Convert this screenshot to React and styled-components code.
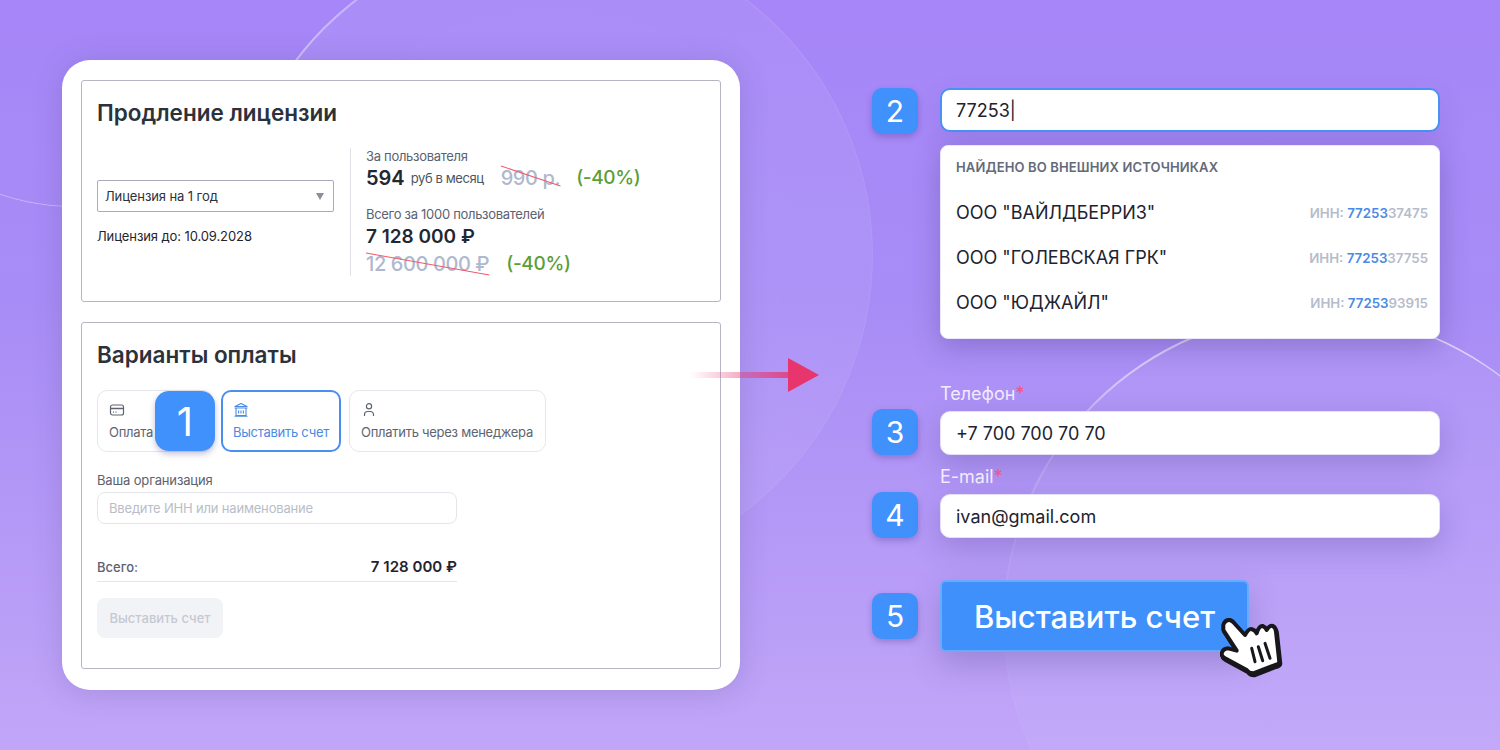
import React from "react";
import styled, { createGlobalStyle } from "styled-components";

const GlobalStyle = createGlobalStyle`
  html, body {
    margin: 0;
    padding: 0;
  }
  body {
    font-family: Inter, "Noto Sans", sans-serif;
    color: #1c2230;
  }
  * {
    box-sizing: border-box;
  }
`;

const Page = styled.div`
  position: relative;
  width: 1500px;
  height: 750px;
  overflow: hidden;
  display: flex;
  padding: 60px 0 0 62px;
  background: linear-gradient(180deg, #a686f8 0%, #a88cf6 40%, #c1a6f8 100%);
`;

const Circle = styled.div`
  position: absolute;
  border-radius: 50%;
  left: ${(p) => p.$x}px;
  top: ${(p) => p.$y}px;
  width: ${(p) => p.$size}px;
  height: ${(p) => p.$size}px;
  background: ${(p) => p.$fill};
  &::before {
    content: "";
    position: absolute;
    inset: 0;
    border-radius: 50%;
    padding: 1.5px;
    background: ${(p) => p.$line};
    mask: linear-gradient(#000 0 0) content-box exclude, linear-gradient(#000 0 0);
  }
`;

const Card = styled.div`
  position: relative;
  width: 678px;
  height: 630px;
  padding: 20px 19px;
  background: #fff;
  border-radius: 28px;
  box-shadow: 0 2px 30px rgba(70, 60, 120, 0.2);
  display: flex;
  flex-direction: column;
  gap: 20px;
`;

const Panel = styled.section`
  position: relative;
  height: ${(p) => p.$h}px;
  padding: 16px 15px 0;
  border: 1px solid #b4b7c3;
  border-radius: 3px;
`;

const PanelTitle = styled.h2`
  margin: 0;
  font-size: 22.5px;
  line-height: 32px;
  font-weight: 600;
  color: #2b323c;
`;

const LicenseRow = styled.div`
  display: flex;
  margin-top: 19px;
  height: 128px;
`;

const LicenseLeft = styled.div`
  width: 237px;
  padding-top: 32px;
`;

const Select = styled.div`
  height: 32px;
  padding: 0 9px 0 7px;
  display: flex;
  align-items: center;
  justify-content: space-between;
  border: 1px solid #a9acb8;
  border-radius: 2px;
  font-size: 13px;
  letter-spacing: -0.1px;
  color: #2b323c;
`;

const Caret = styled.span`
  width: 0;
  height: 0;
  border-left: 4px solid transparent;
  border-right: 4px solid transparent;
  border-top: 7px solid #8a8f9c;
`;

const Until = styled.div`
  margin-top: 16px;
  font-size: 13px;
  line-height: 16px;
  letter-spacing: -0.1px;
  color: #1f2530;
`;

const LicenseRight = styled.div`
  margin-left: 16px;
  padding-left: 15px;
  border-left: 1px solid #dfe1e6;
  display: flex;
  flex-direction: column;
`;

const SmallLabel = styled.div`
  font-size: 13px;
  line-height: 16px;
  letter-spacing: -0.3px;
  color: #5b6270;
  margin-top: ${(p) => p.$top || 0}px;
`;

const PriceRow = styled.div`
  display: flex;
  align-items: center;
  height: ${(p) => p.$h}px;
`;

const Price = styled.span`
  font-size: ${(p) => p.$size}px;
  font-weight: 600;
  color: #222831;
`;

const Unit = styled.span`
  margin-left: 6px;
  font-size: 13px;
  letter-spacing: -0.4px;
  color: #4e5562;
`;

const OldPrice = styled.span`
  position: relative;
  margin-left: ${(p) => p.$left || 0}px;
  font-size: 20px;
  font-weight: 500;
  letter-spacing: -0.4px;
  color: #b0b8cd;
`;

const Strike = styled.svg`
  position: absolute;
  left: 0;
  top: ${(p) => p.$top}px;
  width: 100%;
  height: ${(p) => p.$h}px;
  overflow: visible;
`;

const Discount = styled.span`
  margin-left: ${(p) => p.$left}px;
  font-size: 19px;
  font-weight: 500;
  letter-spacing: -0.35px;
  color: #5c9e37;
`;

const Tabs = styled.div`
  display: flex;
  gap: 8px;
  margin-top: 19px;
`;

const Tab = styled.div`
  width: ${(p) => p.$w}px;
  height: 62px;
  padding: ${(p) => (p.$active ? "10px 10px 0" : "11px 11px 0")};
  border-radius: 10px;
  border: ${(p) => (p.$active ? "2px solid #4a8ff0" : "1px solid #e6e7ec")};
  color: ${(p) => (p.$active ? "#4a8ae6" : "#5e6572")};
  font-size: 13px;
  line-height: 16px;
  letter-spacing: -0.27px;
  white-space: nowrap;
  display: flex;
  flex-direction: column;
  gap: 6px;
  overflow: hidden;
  svg {
    display: block;
  }
`;

const FieldLabel = styled.div`
  margin-top: 20px;
  font-size: 13px;
  line-height: 16px;
  letter-spacing: -0.15px;
  color: #5b6270;
`;

const FakeInput = styled.div`
  width: 360px;
  height: 32px;
  margin-top: 4px;
  padding: 0 11px;
  display: flex;
  align-items: center;
  border: 1px solid #e4e6eb;
  border-radius: 8px;
  font-size: 13px;
  letter-spacing: -0.18px;
  color: #b9bdc8;
`;

const TotalRow = styled.div`
  width: 360px;
  height: 34px;
  margin-top: 24px;
  padding-top: 4px;
  display: flex;
  align-items: center;
  justify-content: space-between;
  border-bottom: 1px solid #e4e6eb;
`;

const TotalLabel = styled.span`
  font-size: 13px;
  font-weight: 500;
  color: #5b6270;
`;

const TotalValue = styled.span`
  font-size: 15px;
  font-weight: 600;
  letter-spacing: 0.03px;
  color: #1f2530;
`;

const DisabledButton = styled.div`
  width: 126px;
  height: 40px;
  margin-top: 16px;
  display: flex;
  align-items: center;
  justify-content: center;
  border-radius: 8px;
  background: #f2f3f7;
  font-size: 13px;
  font-weight: 500;
  color: #c6c9d2;
`;

const Badge = styled.div`
  flex: none;
  width: 46px;
  height: 46px;
  display: flex;
  align-items: center;
  justify-content: center;
  border-radius: 10px;
  background: #4091fb;
  color: #fff;
  font-size: 30px;
  box-shadow: 0 3px 6px rgba(60, 50, 130, 0.3);
`;

const BigBadge = styled(Badge)`
  position: absolute;
  left: 73px;
  top: 68px;
  width: 60px;
  height: 60px;
  border-radius: 14px;
  font-size: 40px;
`;

const Arrow = styled.svg`
  position: absolute;
  left: 690px;
  top: 356px;
`;

const RightColumn = styled.div`
  position: relative;
  margin-left: 132px;
  padding-top: 28px;
  width: 568px;
  display: flex;
  flex-direction: column;
`;

const Row = styled.div`
  display: flex;
  align-items: ${(p) => p.$align || "flex-start"};
  gap: 22px;
  margin-top: ${(p) => p.$top || 0}px;
`;

const FieldColumn = styled.div`
  width: 500px;
  display: flex;
  flex-direction: column;
`;

const Field = styled.div`
  width: 500px;
  height: 44px;
  padding: 0 ${(p) => (p.$focus ? 14 : 15)}px;
  display: flex;
  align-items: center;
  background: #fff;
  border-radius: 10px;
  font-size: 18px;
  color: #1d2330;
  border: ${(p) => (p.$focus ? "2px solid #4a91f5" : "1px solid #e4e0f5")};
  box-shadow: 0 10px 30px rgba(60, 50, 120, ${(p) => (p.$focus ? 0.12 : 0.24)});
`;

const Caption = styled.div`
  font-size: 18px;
  line-height: 22px;
  height: 22px;
  margin-bottom: 6px;
  color: #f2ecff;
`;

const Star = styled.span`
  color: #f0577f;
`;

const Dropdown = styled.div`
  margin-top: 13px;
  width: 500px;
  height: 194px;
  padding: 13px 11px 0 15px;
  background: #fff;
  border: 1px solid #ece8fa;
  border-radius: 8px;
  box-shadow: 0 8px 28px rgba(60, 50, 120, 0.3);
`;

const DropdownTitle = styled.div`
  font-size: 13px;
  line-height: 16px;
  font-weight: 600;
  letter-spacing: 0.14px;
  color: #646a7a;
`;

const OptionList = styled.div`
  margin-top: 15px;
`;

const Option = styled.div`
  display: flex;
  align-items: center;
  justify-content: space-between;
  height: 45px;
  font-size: 18px;
  color: #1d2330;
`;

const Inn = styled.span`
  font-size: 13.3px;
  font-weight: 600;
  color: #b7bccb;
`;

const InnMatch = styled.span`
  color: #4a8ae6;
`;

const BigButton = styled.div`
  position: relative;
  width: 309px;
  height: 72px;
  display: flex;
  align-items: center;
  justify-content: center;
  border-radius: 6px;
  background: #4090fb;
  border: 2px solid #6aaafa;
  color: #fff;
  font-size: 31px;
  font-weight: 500;
  box-shadow: 0 12px 30px rgba(60, 50, 120, 0.25);
`;

const Cursor = styled.div`
  position: absolute;
  left: 278px;
  top: 36px;
  line-height: 0;
  filter: drop-shadow(1px 2px 0 #17171c);
`;

const options = [
  { name: 'ООО "ВАЙЛДБЕРРИЗ"', rest: "37475" },
  { name: 'ООО "ГОЛЕВСКАЯ ГРК"', rest: "37755" },
  { name: 'ООО "ЮДЖАЙЛ"', rest: "93915" },
];

const CardIcon = () => (
  <svg width="16" height="16" viewBox="0 0 16 16" fill="none" stroke="currentColor" strokeWidth="1.2">
    <rect x="1.5" y="3" width="13" height="10" rx="2" />
    <path d="M1.5 6.5h13" strokeWidth="1.6" />
    <path d="M4 10.2h1M6.5 10.2h1" />
  </svg>
);

const BankIcon = () => (
  <svg width="16" height="16" viewBox="0 0 16 16" fill="none" stroke="currentColor" strokeWidth="1.1">
    <path d="M8 1.5 14 4.5H2z" strokeLinejoin="round" />
    <path d="M1.5 6h13M3 6.5v7h10v-7M1.5 14.2h13" />
    <path d="M5.6 8.5v3M8 8.5v3M10.4 8.5v3" />
  </svg>
);

const UserIcon = () => (
  <svg width="16" height="16" viewBox="0 0 16 16" fill="none" stroke="currentColor" strokeWidth="1.2">
    <circle cx="8" cy="4.3" r="2.6" />
    <path d="M3.5 14v-1.5a3 3 0 0 1 3-3h3a3 3 0 0 1 3 3V14" />
  </svg>
);

const HandCursor = () => (
  <svg width="64" height="60" viewBox="0 0 64 60">
    <path
      d="M3.3 7Q5 1.5 10 2 13 3 15 6L25 17Q29 10 32 11.3 35 12 36.7 15.3 39 7.5 42.7 8 45.5 9 46.7 12 50 7 52.7 8 55.5 9 56 13.7L59.3 43.7Q59 46 55 47L33.3 55.3Q29 55.5 26.7 52L5 40.3Q1 38 1.7 35.3 3 30.5 8.3 30.3L16.7 32.7 3.3 12Z"
      fill="#fff"
      stroke="#17171c"
      strokeWidth="4"
      strokeLinejoin="round"
    />
    <path d="M31.7 30.3l3.3 13.4M38.3 28.7l4.4 14M45 25.3l5 15" stroke="#17171c" strokeWidth="3" strokeLinecap="round" />
  </svg>
);

const App = () => {
  return (
    <Page>
      <GlobalStyle />
      <Circle
        $x={229}
        $y={-67}
        $size={644}
        $fill="radial-gradient(circle at 50% 55%, rgba(255,255,255,0.08), rgba(255,255,255,0.05))"
        $line="linear-gradient(110deg, rgba(255,255,255,0.6) 5%, rgba(255,255,255,0.05) 30%, rgba(255,255,255,0.07) 85%)"
      />
      <Circle
        $x={-150}
        $y={-237}
        $size={444}
        $fill="transparent"
        $line="linear-gradient(180deg, transparent 88%, rgba(255,255,255,0.4) 100%)"
      />
      <Circle
        $x={1003}
        $y={312}
        $size={620}
        $fill="linear-gradient(180deg, rgba(255,255,255,0.05), rgba(255,255,255,0.03))"
        $line="linear-gradient(180deg, rgba(255,255,255,0.6) 5%, rgba(255,255,255,0.2) 20%, rgba(255,255,255,0.03) 45%)"
      />
      <Card>
        <Panel $h={222}>
          <PanelTitle>Продление лицензии</PanelTitle>
          <LicenseRow>
            <LicenseLeft>
              <Select>
                Лицензия на 1 год
                <Caret />
              </Select>
              <Until>Лицензия до: 10.09.2028</Until>
            </LicenseLeft>
            <LicenseRight>
              <SmallLabel>За пользователя</SmallLabel>
              <PriceRow $h={28}>
                <Price $size={20}>594</Price>
                <Unit>руб в месяц</Unit>
                <OldPrice $left={17}>
                  990 р.
                  <Strike $top={-1} $h={22} viewBox="0 0 59 22" preserveAspectRatio="none">
                    <line x1="0" y1="1" x2="59" y2="21" stroke="#ef5b6b" strokeWidth="1" />
                  </Strike>
                </OldPrice>
                <Discount $left={16}>(-40%)</Discount>
              </PriceRow>
              <SmallLabel $top={15}>Всего за 1000 пользователей</SmallLabel>
              <PriceRow $h={31}>
                <Price $size={19}>7 128 000 ₽</Price>
              </PriceRow>
              <PriceRow $h={25}>
                <OldPrice>
                  12 600 000 ₽
                  <Strike $top={0} $h={24} viewBox="0 0 122 24" preserveAspectRatio="none">
                    <line x1="0" y1="1" x2="122" y2="23" stroke="#ef5b6b" strokeWidth="1" />
                  </Strike>
                </OldPrice>
                <Discount $left={17}>(-40%)</Discount>
              </PriceRow>
            </LicenseRight>
          </LicenseRow>
        </Panel>
        <Panel $h={347}>
          <PanelTitle>Варианты оплаты</PanelTitle>
          <Tabs>
            <Tab $w={116}>
              <CardIcon />
              Оплата картой
            </Tab>
            <Tab $w={120} $active>
              <BankIcon />
              Выставить счет
            </Tab>
            <Tab $w={197}>
              <UserIcon />
              Оплатить через менеджера
            </Tab>
          </Tabs>
          <BigBadge>1</BigBadge>
          <FieldLabel>Ваша организация</FieldLabel>
          <FakeInput>Введите ИНН или наименование</FakeInput>
          <TotalRow>
            <TotalLabel>Всего:</TotalLabel>
            <TotalValue>7 128 000 ₽</TotalValue>
          </TotalRow>
          <DisabledButton>Выставить счет</DisabledButton>
        </Panel>
      </Card>
      <Arrow width="132" height="38" viewBox="0 0 132 38">
        <defs>
          <linearGradient id="arrowFade" x1="0" x2="1" y1="0" y2="0">
            <stop offset="0" stopColor="#e8356d" stopOpacity="0" />
            <stop offset="1" stopColor="#e8356d" stopOpacity="0.8" />
          </linearGradient>
        </defs>
        <rect x="0" y="16" width="100" height="6" fill="url(#arrowFade)" />
        <path d="M98 2l31 17-31 17z" fill="#e8356d" />
      </Arrow>
      <RightColumn>
        <Row>
          <Badge>2</Badge>
          <FieldColumn>
            <Field $focus>77253|</Field>
            <Dropdown>
              <DropdownTitle>НАЙДЕНО ВО ВНЕШНИХ ИСТОЧНИКАХ</DropdownTitle>
              <OptionList>
                {options.map((o) => (
                  <Option key={o.name}>
                    {o.name}
                    <Inn>
                      ИНН: <InnMatch>77253</InnMatch>
                      {o.rest}
                    </Inn>
                  </Option>
                ))}
              </OptionList>
            </Dropdown>
          </FieldColumn>
        </Row>
        <Row $align="flex-end" $top={44}>
          <Badge>3</Badge>
          <FieldColumn>
            <Caption>
              Телефон<Star>*</Star>
            </Caption>
            <Field>+7 700 700 70 70</Field>
          </FieldColumn>
        </Row>
        <Row $align="flex-end" $top={11}>
          <Badge>4</Badge>
          <FieldColumn>
            <Caption>
              E-mail<Star>*</Star>
            </Caption>
            <Field>ivan@gmail.com</Field>
          </FieldColumn>
        </Row>
        <Row $align="center" $top={42}>
          <Badge>5</Badge>
          <BigButton>
            Выставить счет
            <Cursor>
              <HandCursor />
            </Cursor>
          </BigButton>
        </Row>
      </RightColumn>
    </Page>
  );
};

export default App;
